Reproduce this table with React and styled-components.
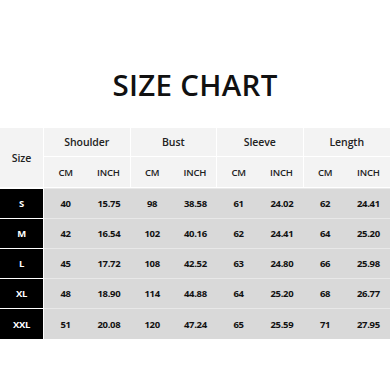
import styled, { createGlobalStyle } from 'styled-components';

const GlobalStyle = createGlobalStyle`
  body {
    margin: 0;
    background: #fff;
    font-family: 'Open Sans', 'Liberation Sans', sans-serif;
  }
`;

const Page = styled.div`
  width: 390px;
  height: 390px;
  display: flex;
  flex-direction: column;
  align-items: stretch;
  overflow: hidden;
`;

const Title = styled.h1`
  margin: 0;
  height: 128px;
  display: flex;
  align-items: center;
  justify-content: center;
  padding-top: 40px;
  box-sizing: border-box;
  font-size: 29.5px;
  font-weight: 600;
  color: #111;
  letter-spacing: 0.3px;
`;

const Grid = styled.div`
  display: grid;
  grid-template-columns: 44px repeat(8, 1fr);
  grid-template-rows: 29px 31px repeat(4, 30px) 31px;
`;

const HeadCell = styled.div`
  grid-column: span ${({ $span }) => $span || 1};
  grid-row: span ${({ $rows }) => $rows || 1};
  background: #f3f3f3;
  border-bottom: 1px solid #fff;
  border-right: ${({ $edge }) => ($edge ? '1px solid #fff' : '0')};
  display: flex;
  align-items: center;
  justify-content: center;
  font-size: ${({ $small }) => ($small ? '9.5px' : '10.5px')};
  font-weight: 600;
  letter-spacing: ${({ $small }) => ($small ? '-0.2px' : '-0.1px')};
  color: #222;
`;

const SizeCell = styled.div`
  background: #000;
  color: #fff;
  border-top: 1px solid #fff;
  border-right: 1px solid #fff;
  display: flex;
  align-items: center;
  justify-content: center;
  font-size: 9.5px;
  font-weight: 700;
  letter-spacing: -0.3px;
`;

const ValueCell = styled.div`
  background: #d9d9d9;
  border-top: 1px solid #e8e8e8;
  display: flex;
  align-items: center;
  justify-content: center;
  font-size: 9.5px;
  font-weight: 700;
  letter-spacing: -0.35px;
  color: #111;
`;

const groups = ['Shoulder', 'Bust', 'Sleeve', 'Length'];

const rows = [
  ['S', '40', '15.75', '98', '38.58', '61', '24.02', '62', '24.41'],
  ['M', '42', '16.54', '102', '40.16', '62', '24.41', '64', '25.20'],
  ['L', '45', '17.72', '108', '42.52', '63', '24.80', '66', '25.98'],
  ['XL', '48', '18.90', '114', '44.88', '64', '25.20', '68', '26.77'],
  ['XXL', '51', '20.08', '120', '47.24', '65', '25.59', '71', '27.95'],
];

const App = () => {
  return (
    <Page>
      <GlobalStyle />
      <Title>SIZE CHART</Title>
      <Grid>
        <HeadCell $rows={2} $edge>Size</HeadCell>
        {groups.map((g, i) => (
          <HeadCell key={g} $span={2} $edge={i < 3}>
            {g}
          </HeadCell>
        ))}
        {groups.map((g, i) => [
          <HeadCell key={g + 'cm'} $small>CM</HeadCell>,
          <HeadCell key={g + 'in'} $small $edge={i < 3}>INCH</HeadCell>,
        ])}
        {rows.map((r) => [
          <SizeCell key={r[0]}>{r[0]}</SizeCell>,
          ...r.slice(1).map((v, i) => (
            <ValueCell key={r[0] + i}>{v}</ValueCell>
          )),
        ])}
      </Grid>
    </Page>
  );
};

export default App;
